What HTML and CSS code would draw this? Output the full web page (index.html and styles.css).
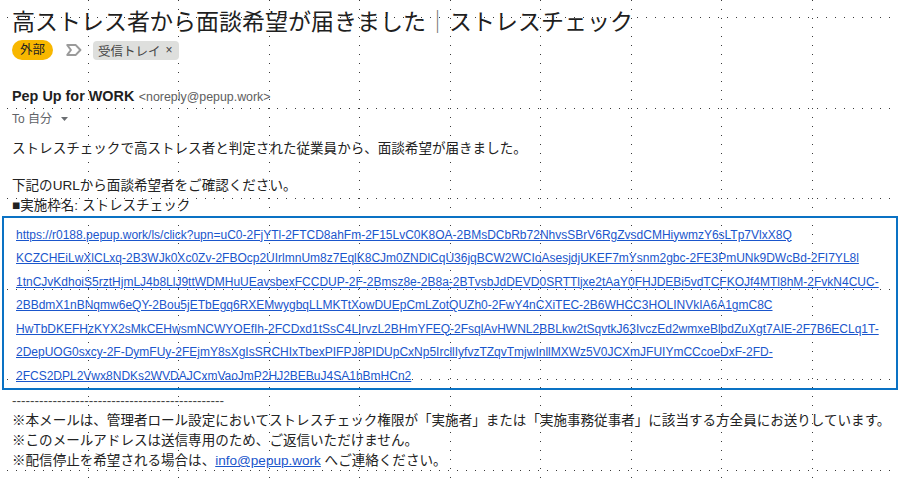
FILE: index.html
```html
<!DOCTYPE html>
<html lang="ja">
<head>
    <meta charset="UTF-8">
    <meta name="viewport" content="width=device-width, initial-scale=1.0">
    <title>高ストレス者から面談希望が届きました</title>
    <link rel="stylesheet" href="styles.css">
</head>
<body>
    <div class="mail">
        <h1 class="subject">高ストレス者から面談希望が届きました<span class="bar">｜</span>ストレスチェック</h1>

        <div class="labels">
            <span class="tag-external">外部</span>
            <svg class="marker" width="16" height="12" viewBox="0 0 16 12">
                <path d="M1.3 1.1h8.5l4.6 4.9-4.6 4.9H1.3L4.9 6z" fill="none" stroke="#9b9b9b" stroke-width="2" stroke-linejoin="round"/>
            </svg>
            <span class="tag-inbox">受信トレイ<span class="tag-close">×</span></span>
        </div>

        <div class="sender">
            <span class="sender-name">Pep Up for WORK</span>
            <span class="sender-mail">&lt;noreply@pepup.work&gt;</span>
        </div>
        <div class="recipient">
            To 自分
            <svg class="caret" width="7" height="4" viewBox="0 0 7 4"><path d="M0 0h7L3.5 4z" fill="#6b6e72"/></svg>
        </div>

        <div class="content">
            <p class="first">ストレスチェックで高ストレス者と判定された従業員から、面談希望が届きました。</p>
            <p class="second">下記のURLから面談希望者をご確認ください。<br>■実施枠名: ストレスチェック</p>

            <div class="link-box">
                <a href="#">https://r0188.pepup.work/ls/click?upn=uC0-2FjYTl-2FTCD8ahFm-2F15LvC0K8OA-2BMsDCbRb72NhvsSBrV6RgZvsdCMHiywmzY6sLTp7VlxX8Q<br>KCZCHEiLwXlCLxq-2B3WJk0Xc0Zv-2FBOcp2UIrlmnUm8z7EqlK8CJm0ZNDlCqU36jqBCW2WCIoAsesjdjUKEF7mYsnm2gbc-2FE3PmUNk9DWcBd-2FI7YL8l<br>1tnCJvKdhoiS5rztHjmLJ4b8LlJ9ttWDMHuUEavsbexFCCDUP-2F-2Bmsz8e-2B8a-2BTvsbJdDEVD0SRTTljxe2tAaY0FHJDEBi5vdTCFKOJf4MTl8hM-2FvkN4CUC-<br>2BBdmX1nBNqmw6eQY-2Bou5jETbEgq6RXEMwygbqLLMKTtXowDUEpCmLZotQUZh0-2FwY4nCXiTEC-2B6WHCC3HOLINVkIA6A1gmC8C<br>HwTbDKEFHzKYX2sMkCEHwsmNCWYOEfIh-2FCDxd1tSsC4LIrvzL2BHmYFEQ-2FsqlAvHWNL2BBLkw2tSqvtkJ63IvczEd2wmxeBlbdZuXgt7AIE-2F7B6ECLq1T-<br>2DepUOG0sxcy-2F-DymFUy-2FEjmY8sXgIsSRCHIxTbexPIFPJ8PIDUpCxNp5IrcllIyfvzTZqvTmjwInllMXWz5V0JCXmJFUIYmCCcoeDxF-2FD-<br>2FCS2DPL2Vwx8NDKs2WVDAJCxmVaoJmP2HJ2BEBuJ4SA1hBmHCn2</a>
            </div>

            <p class="rule">-----------------------------------------------</p>
            <p class="notes">※本メールは、管理者ロール設定においてストレスチェック権限が「実施者」または「実施事務従事者」に該当する方全員にお送りしています。<br>※このメールアドレスは送信専用のため、ご返信いただけません。<br>※配信停止を希望される場合は、<a href="mailto:info@pepup.work">info@pepup.work</a> へご連絡ください。</p>
        </div>
    </div>
</body>
</html>
```

FILE: styles.css
```css
body {
    margin: 0;
    min-height: 100vh;
    font-family: "Liberation Sans", Arial, "Noto Sans CJK JP", sans-serif;
    color: #222;
    background-color: #fff;
    /* dotted guide grid */
    background-image:
        conic-gradient(from 90deg at 1px 1px, transparent 0 50%, #3a3a3a 0 75%, transparent 0),
        conic-gradient(from 90deg at 1px 1px, transparent 0 50%, #3a3a3a 0 75%, transparent 0),
        conic-gradient(from 90deg at 1px 1px, transparent 0 50%, #3a3a3a 0 75%, transparent 0),
        conic-gradient(from 90deg at 1px 1px, transparent 0 50%, #3a3a3a 0 75%, transparent 0);
    background-size: 181px 9px, 181px 9px, 9px 181px, 9px 181px;
    background-position: 88px 0, 178px 0, 7px 17px, 7px 108px;
}

.mail {
    padding: 6px 0 0 2px;
}

.subject,
.labels,
.sender,
.recipient,
.content p {
    margin: 0;
    padding-left: 10px;
}

.subject {
    font-family: "Noto Sans CJK JP", sans-serif;
    font-size: 23px;
    font-weight: normal;
    line-height: 28px;
    color: #1f1f1f;
}

.subject .bar {
    color: #777;
}

.labels {
    display: flex;
    align-items: center;
    height: 20px;
    margin-top: 6px;
}

.tag-external {
    height: 20px;
    padding: 0 8px;
    border-radius: 10px;
    background-color: #f8b700;
    font-size: 12.5px;
    line-height: 20px;
    color: #222;
}

.marker {
    margin-left: 13px;
}

.tag-inbox {
    display: flex;
    align-items: center;
    height: 19px;
    margin-left: 11px;
    padding: 0 6px 0 5px;
    border-radius: 4px;
    background-color: #dedfdd;
    font-size: 12.5px;
    color: #444;
}

.tag-close {
    margin-left: 5px;
    font-size: 12px;
}

.sender {
    margin-top: 26px;
    line-height: 20px;
}

.sender-name {
    font-size: 14.4px;
    font-weight: bold;
    color: #1f1f1f;
}

.sender-mail {
    font-size: 12.4px;
    color: #5e5e5e;
}

.recipient {
    margin-top: 3px;
    font-size: 12px;
    line-height: 18px;
    color: #5f6368;
}

.caret {
    margin-left: 6px;
    vertical-align: 2px;
}

.content p {
    font-size: 13.55px;
    line-height: 20px;
}

.content .first {
    margin-top: 11px;
}

.content .second {
    margin-top: 17px;
}

.link-box {
    border: 2px solid #0a72c4;
    padding: 4.5px 0 1px 12px;
    line-height: 22.5px;
    white-space: nowrap;
    overflow: hidden;
}

.link-box a {
    font-size: 12px;
    color: #1a56cc;
}

.content .rule {
    margin-top: 1px;
    color: #444;
}

.notes a {
    color: #1a56cc;
}
```
